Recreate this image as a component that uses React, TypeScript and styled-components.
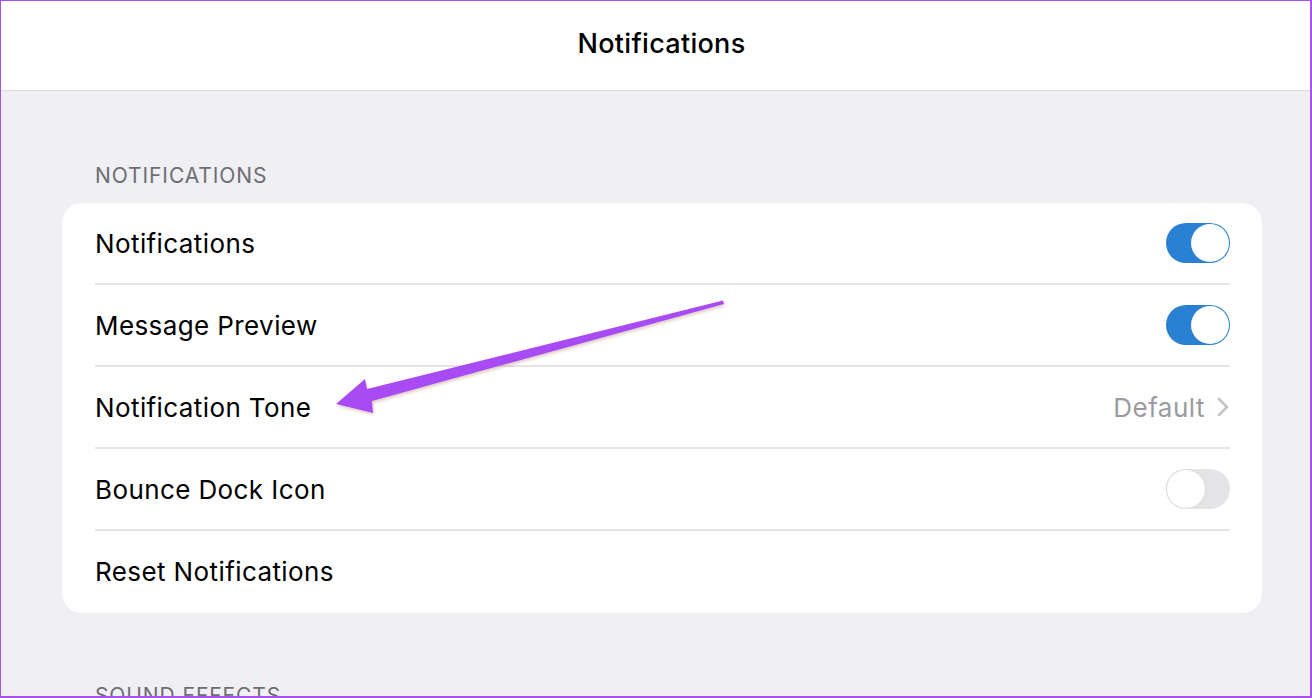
import React from 'react';
import styled, {createGlobalStyle} from 'styled-components';

const GlobalStyle = createGlobalStyle`
    html, body {
        margin: 0;
        padding: 0;
        background: #efeff4;
    }
    * {
        box-sizing: border-box;
    }
`;

type RowType = {
    label: string;
    kind: 'on' | 'off' | 'value' | 'none';
    value?: string;
};

const rows: RowType[] = [
    {label: 'Notifications', kind: 'on'},
    {label: 'Message Preview', kind: 'on'},
    {label: 'Notification Tone', kind: 'value', value: 'Default'},
    {label: 'Bounce Dock Icon', kind: 'off'},
    {label: 'Reset Notifications', kind: 'none'},
];

export default function App() {
    return (
        <>
            <GlobalStyle/>
            <Frame>
                <Header>Notifications</Header>
                <Content>
                    <SectionTitle>Notifications</SectionTitle>
                    <Card>
                        {rows.map((row, i) => (
                            <Row key={row.label} last={i === rows.length - 1}>
                                <Label>{row.label}</Label>
                                {row.kind === 'on' && <Toggle on={true}><Knob on={true}/></Toggle>}
                                {row.kind === 'off' && <Toggle on={false}><Knob on={false}/></Toggle>}
                                {row.kind === 'value' && (
                                    <Value>
                                        {row.value}
                                        <svg width="14" height="22" viewBox="0 0 14 22">
                                            <path d="M3 3 L11 11 L3 19" fill="none" stroke="#c4c4c7"
                                                  strokeWidth="2.6" strokeLinecap="round" strokeLinejoin="round"/>
                                        </svg>
                                    </Value>
                                )}
                            </Row>
                        ))}
                    </Card>
                    <SectionTitle next>Sound Effects</SectionTitle>
                </Content>
                <Pointer width="1312" height="698" viewBox="0 0 1312 698">
                    <defs>
                        <filter id="soft" x="-10%" y="-10%" width="120%" height="120%">
                            <feDropShadow dx="1" dy="2" stdDeviation="1.5" floodColor="#7a3a00" floodOpacity="0.25"/>
                        </filter>
                    </defs>
                    <path
                        d="M723 300.5 L724 304 L372 401 L373 413 L336 404 L365 379 L367 389 Z"
                        fill="#a94cf5"
                        filter="url(#soft)"
                    />
                </Pointer>
            </Frame>
        </>
    );
}

const Frame = styled.div`
    position: relative;
    width: 1312px;
    height: 698px;
    overflow: hidden;
    background: #efeff4;
    border: 2px solid #a652ef;
    border-top-width: 1px;
    border-left-width: 1px;
    font-family: Inter, "Liberation Sans", sans-serif;
    color: #000;
`;

const Header = styled.header`
    height: 90px;
    background: #fff;
    border-bottom: 1px solid #dddde0;
    display: flex;
    align-items: center;
    justify-content: center;
    font-size: 27px;
    font-weight: 500;
    padding-bottom: 4px;
    padding-left: 12px;
    letter-spacing: 0.3px;
`;

const Content = styled.main`
    padding: 0 48px 0 61px;
`;

const SectionTitle = styled.h3<{ next?: boolean }>`
    margin: 0;
    padding: ${p => p.next ? '69px' : '71px'} 0 0 33px;
    height: ${p => p.next ? 'auto' : '112px'};
    font-size: 21px;
    font-weight: 400;
    text-transform: uppercase;
    color: #6d6d72;
    letter-spacing: 0.9px;
    line-height: 28px;
`;

const Card = styled.section`
    background: #fff;
    border-radius: 20px;
    padding-left: 33px;
`;

const Row = styled.div<{ last: boolean }>`
    height: 82px;
    display: flex;
    align-items: center;
    justify-content: space-between;
    margin-right: 32px;
    border-bottom: ${p => p.last ? 'none' : '2px solid #e6e6e9'};
    padding-bottom: ${p => p.last ? '2px' : '0'};
`;

const Label = styled.span`
    font-size: 26px;
    letter-spacing: 0.4px;
`;

const Toggle = styled.span<{ on: boolean }>`
    width: 64px;
    height: 40px;
    border-radius: 20px;
    background: ${p => p.on ? '#2a81d3' : '#e4e4e6'};
    display: flex;
    align-items: center;
    justify-content: ${p => p.on ? 'flex-end' : 'flex-start'};
    padding: 0 1px;
`;

const Knob = styled.span<{ on: boolean }>`
    width: 38px;
    height: 38px;
    border-radius: 50%;
    background: #fff;
    box-shadow: ${p => p.on ? 'none' : '0 0 0 1px #dcdcdc'};
`;

const Value = styled.span`
    display: flex;
    align-items: center;
    gap: 11px;
    font-size: 26px;
    letter-spacing: 0.5px;
    color: #9b9b9e;
`;

const Pointer = styled.svg`
    position: absolute;
    left: -1px;
    top: -1px;
    pointer-events: none;
`;
